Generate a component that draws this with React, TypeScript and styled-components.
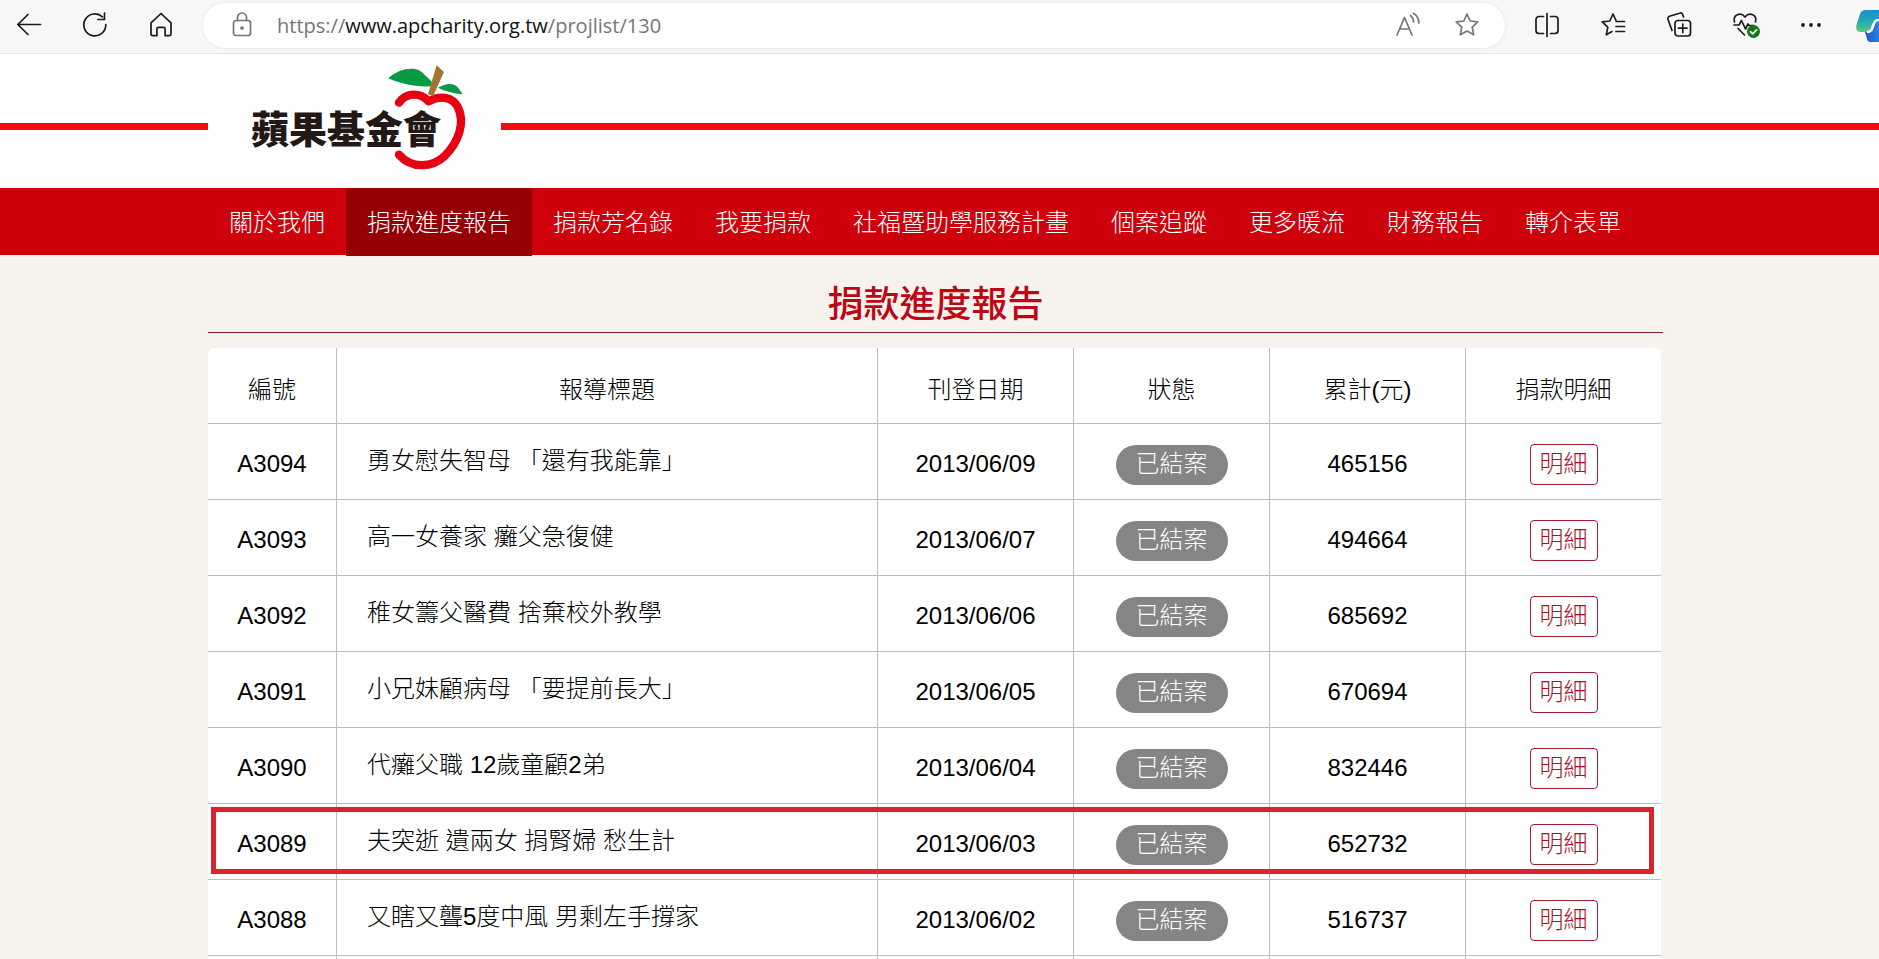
import React from "react";
import styled, { createGlobalStyle } from "styled-components";

const GlobalStyle = createGlobalStyle`
  * { box-sizing: border-box; }
  body {
    margin: 0;
    background: #f7f2ec;
    color: #000;
    font-family: "Liberation Sans", "Noto Sans CJK TC", sans-serif;
    font-size: 24px;
    font-weight: 300;
  }
`;

const Page = styled.div`
  height: 100vh;
  overflow: hidden;
`;

/* Browser bar */

const Toolbar = styled.div`
  display: flex;
  align-items: center;
  height: 54px;
  padding: 0 0 3px 17px;
  background: #f7f7f7;
  border-bottom: 1px solid #e6e6e6;
  overflow: hidden;
`;

const ToolGroup = styled.div`
  display: flex;
  flex: none;
  gap: 42px;
`;

const IconButton = styled.button<{ $muted?: boolean }>`
  display: flex;
  flex: none;
  width: 24px;
  height: 26px;
  padding: 0;
  border: 0;
  background: none;
  color: ${(p) => (p.$muted ? "#767676" : "#1b1b1b")};
  cursor: pointer;

  svg {
    flex: none;
    overflow: visible;
  }
`;

const CopilotButton = styled(IconButton)`
  width: 23px;
  height: 34px;
  margin-left: 33px;
`;

const AddressBar = styled.div`
  display: flex;
  flex: 1;
  align-items: center;
  height: 45px;
  margin: 0 30px;
  padding: 0 26px 0 27px;
  border-radius: 23px;
  background: #fff;
  box-shadow: 0 0 4px rgba(0, 0, 0, 0.08);
`;

const Url = styled.div`
  flex: 1;
  margin-left: 23px;
  padding-top: 1px;
  color: #767676;
  font-family: "Open Sans", sans-serif;
  font-size: 20px;
  font-weight: 400;
  line-height: 28px;
  white-space: nowrap;
  outline: none;

  b {
    color: #111;
    font-weight: 400;
  }
`;

const AddressActions = styled.div`
  display: flex;
  gap: 35px;
`;

/* Site header */

const Header = styled.header`
  display: flex;
  align-items: center;
  padding-top: 11px;
  background: #fff;
`;

const Stripe = styled.span<{ $fill?: boolean }>`
  flex: ${(p) => (p.$fill ? "1" : "0 0 208px")};
  height: 7px;
  background: #f20d0d;
`;

const LogoLink = styled.a`
  display: block;
  flex: none;
  height: 123px;
`;

const LogoText = styled.text`
  font-family: "Noto Sans CJK TC", sans-serif;
  font-size: 38px;
  font-weight: 900;
  fill: #231815;
`;

const Nav = styled.nav`
  display: flex;
  height: 67px;
  padding-left: 208px;
  background: #ce000b;
`;

const NavLink = styled.a<{ $active?: boolean }>`
  height: ${(p) => (p.$active ? "68px" : "67px")};
  padding: 0 21px;
  background: ${(p) => (p.$active ? "#940004" : "transparent")};
  color: #fff;
  line-height: 69px;
  text-decoration: none;
  white-space: nowrap;
`;

/* Report */

const Main = styled.main`
  padding: 0 216px 0 208px;
`;

const Title = styled.h1`
  margin: 0;
  padding: 23px 0 0;
  border-bottom: 1px solid #8f1c2c;
  color: #be0614;
  font-size: 36px;
  font-weight: 500;
  line-height: 54px;
  text-align: center;
`;

const TableWrap = styled.div`
  margin: 15px 2px 0 0;
  border-radius: 6px;
  background: #fff;
`;

const Table = styled.table`
  width: 100%;
  table-layout: fixed;
  border-collapse: separate;
  border-spacing: 0;
`;

const Col = styled.col<{ $width?: number }>`
  width: ${(p) => (p.$width ? `${p.$width}px` : "auto")};
`;

const Row = styled.tr`
  position: relative;
  height: 76px;
`;

const Marker = styled.span`
  position: absolute;
  inset: 3px 7px 6px 3px;
  border: 5px solid #dc232b;
  pointer-events: none;
`;

const HeadCell = styled.th`
  padding: 8px 0 0;
  border-bottom: 1px solid #bdbdbd;
  border-right: 1px solid #bdbdbd;
  font-weight: 300;
  line-height: 36px;

  &:last-child { border-right: 0; }
`;

const Cell = styled.td`
  padding: 5px 0 0;
  border-bottom: 1px solid #bdbdbd;
  border-right: 1px solid #bdbdbd;
  line-height: 36px;
  text-align: center;
  vertical-align: middle;
  white-space: nowrap;

  &:last-child { border-right: 0; }
`;

const TitleCell = styled(Cell)`
  padding: 0 0 2px 30px;
  text-align: left;
`;

const Status = styled.span`
  display: block;
  width: 112px;
  height: 40px;
  margin: 2px auto 0;
  border-radius: 20px;
  background: #858585;
  color: #fff;
  line-height: 38px;
`;

const DetailButton = styled.button`
  display: block;
  width: 68px;
  height: 41px;
  margin: 0 auto;
  padding: 0;
  border: 1px solid #9c1b2f;
  border-radius: 4px;
  background: #fff;
  color: #b00d28;
  font: inherit;
  line-height: 38px;
  cursor: pointer;
`;

const line = {
  fill: "none",
  stroke: "currentColor",
  strokeWidth: 1.7,
  strokeLinecap: "round" as const,
  strokeLinejoin: "round" as const,
};

const Icon = ({ children }: { children: React.ReactNode }) => (
  <svg width="24" height="26" viewBox="0 0 24 26" aria-hidden="true" {...line}>
    {children}
  </svg>
);

const BackIcon = () => (
  <Icon>
    <path d="M23.5 12.5H.8M11 2.5.8 12.5 11 22.500" />
  </Icon>
);

const RefreshIcon = () => (
  <Icon>
    <path d="M22.800 12.500A11 11 0 1 1 19.500 5M21.500 1v6.500H15" />
  </Icon>
);

const HomeIcon = () => (
  <Icon>
    <path d="M2 10.800 12 1.500l10 9.300v11.200a1.600 1.600 0 0 1-1.600 1.600h-4.300V17a1.600 1.600 0 0 0-1.600-1.600h-5A1.600 1.600 0 0 0 7.900 17v6.600H3.600A1.600 1.600 0 0 1 2 22z" />
  </Icon>
);

const LockIcon = () => (
  <Icon>
    <rect x="3.500" y="8.500" width="17" height="15" rx="2.500" />
    <path d="M7.500 8.500V5.500a4.500 4.500 0 0 1 9 0v3" />
    <circle cx="12" cy="16" r="1" fill="currentColor" />
  </Icon>
);

const ReadAloudIcon = () => (
  <Icon>
    <path d="M1 23 8.500 5.500 16 23M3.700 17h9.600M14.500 3.500c2 1.500 3 3.700 3 6.500M17.500 1.500c3.500 2 5.300 5.500 5.300 9.500" />
  </Icon>
);

const StarIcon = () => (
  <Icon>
    <path d="m12 2 3.200 7 7.600.9-5.600 5.300 1.500 7.600L12 19.100l-6.700 3.700 1.500-7.600L1.200 9.900 8.800 9z" />
  </Icon>
);

const SplitIcon = () => (
  <Icon>
    <path d="M12 1.500v23M8.500 4.500H4A3 3 0 0 0 1 7.500v11a3 3 0 0 0 3 3h4.500M15.500 4.500H20a3 3 0 0 1 3 3v11a3 3 0 0 1-3 3h-4.500" />
  </Icon>
);

const FavoritesIcon = () => (
  <Icon>
    <path d="M15.200 9 12 2 8.800 9l-7.600.9 5.600 5.300-1.500 7.600 5.700-3.200M15.200 9.500H23.500M15 14.500h8.500M15 19.500h8.500" />
  </Icon>
);

const CollectionsIcon = () => (
  <Icon>
    <rect x="8" y="8.500" width="15.500" height="15.500" rx="3" />
    <path d="M15.800 12v8.500M11.500 16.200H20M5 18.500 1 7.500A2.500 2.500 0 0 1 2.500 4.200L12.500 1.200A2.500 2.500 0 0 1 15.700 2.700L16.500 5" />
  </Icon>
);

const HealthIcon = () => (
  <Icon>
    <path d="M1.500 10C-.5 3 7.500-.5 12 5c4.500-5.500 12.500-2 10.500 5M1 13h5l2.500-4.500L12.500 17l2.500-5 1 1.500H21M5 16.500l6.500 6.500" />
    <circle cx="20.500" cy="19.500" r="6.500" fill="#137a13" stroke="none" />
    <path d="m17.500 19.700 2.200 2.200 3.900-4" stroke="#fff" />
  </Icon>
);

const MoreIcon = () => (
  <Icon>
    <g fill="currentColor" stroke="none">
      <circle cx="4" cy="13" r="1.900" />
      <circle cx="12" cy="13" r="1.900" />
      <circle cx="20" cy="13" r="1.900" />
    </g>
  </Icon>
);

const CopilotIcon = () => (
  <svg width="36" height="34" viewBox="0 0 36 34" aria-hidden="true">
    <defs>
      <linearGradient id="copilotTeal" x1="0" y1="0" x2="0" y2="1">
        <stop offset="0" stopColor="#1690d0" />
        <stop offset="0.500" stopColor="#22a9b8" />
        <stop offset="1" stopColor="#5ccb74" />
      </linearGradient>
      <linearGradient id="copilotBlue" x1="0" y1="0" x2="1" y2="0">
        <stop offset="0" stopColor="#2054c8" />
        <stop offset="1" stopColor="#31aef0" />
      </linearGradient>
    </defs>
    <path d="M10 2h17l-7 11c-3 1-4 3-5 7-1 3-2 4-4 4H5c-4 0-5.500-3-4.500-7L4 6c1-3 3-4 6-4z" fill="url(#copilotTeal)" />
    <path d="M9 24h3c3 0 5-2 6-6l3-9h15v25H15c-3 0-4-2-4.500-5z" fill="url(#copilotBlue)" />
    <path d="M11 24c4 0 5-2 6.500-7s2.500-5 6.500-5" fill="none" stroke="#fff" strokeWidth="2.500" />
  </svg>
);

const Logo = () => (
  <svg width="293" height="123" viewBox="0 0 293 123" role="img" aria-label="蘋果基金會">
    <g transform="translate(-18 -15) scale(0.3333)">
      <path
        d="M627 158C648 127 690 126 716 154C748 136 786 138 804 172C826 218 806 276 765 317C725 355 664 356 627 314"
        fill="none"
        stroke="#e60012"
        strokeWidth="25"
        strokeLinecap="round"
        strokeLinejoin="round"
      />
      <path d="M595 85C625 56 668 50 690 62C704 72 714 84 726 96L722 109C690 112 636 104 595 85z" fill="#0a9a44" />
      <path d="M744 113C764 100 788 98 799 108C807 115 812 124 818 133C790 130 765 124 744 113z" fill="#0a9a44" />
      <path d="M740 46 762 66 730 137 714 133z" fill="#a57430" />
    </g>
    <LogoText x="43" y="78">蘋果基金會</LogoText>
  </svg>
);

const navItems = [
  "關於我們",
  "捐款進度報告",
  "捐款芳名錄",
  "我要捐款",
  "社福暨助學服務計畫",
  "個案追蹤",
  "更多暖流",
  "財務報告",
  "轉介表單",
];

const columns: { label: string; width?: number }[] = [
  { label: "編號", width: 129 },
  { label: "報導標題" },
  { label: "刊登日期", width: 196 },
  { label: "狀態", width: 196 },
  { label: "累計(元)", width: 196 },
  { label: "捐款明細", width: 195 },
];

const reports = [
  { id: "A3094", title: "勇女慰失智母 「還有我能靠」", date: "2013/06/09", total: "465156" },
  { id: "A3093", title: "高一女養家 癱父急復健", date: "2013/06/07", total: "494664" },
  { id: "A3092", title: "稚女籌父醫費 捨棄校外教學", date: "2013/06/06", total: "685692" },
  { id: "A3091", title: "小兄妹顧病母 「要提前長大」", date: "2013/06/05", total: "670694" },
  { id: "A3090", title: "代癱父職 12歲童顧2弟", date: "2013/06/04", total: "832446" },
  { id: "A3089", title: "夫突逝 遺兩女 捐腎婦 愁生計", date: "2013/06/03", total: "652732", marked: true },
  { id: "A3088", title: "又瞎又聾5度中風 男剩左手撐家", date: "2013/06/02", total: "516737" },
];

export default function App() {
  return (
    <Page>
      <GlobalStyle />
      <Toolbar>
        <ToolGroup>
          <IconButton aria-label="Back"><BackIcon /></IconButton>
          <IconButton aria-label="Refresh"><RefreshIcon /></IconButton>
          <IconButton aria-label="Home"><HomeIcon /></IconButton>
        </ToolGroup>
        <AddressBar>
          <IconButton $muted aria-label="Site information"><LockIcon /></IconButton>
          <Url role="textbox" aria-label="Address" contentEditable suppressContentEditableWarning spellCheck={false}>
            https://<b>www.apcharity.org.tw</b>/projlist/130
          </Url>
          <AddressActions>
            <IconButton $muted aria-label="Read aloud"><ReadAloudIcon /></IconButton>
            <IconButton $muted aria-label="Add to favorites"><StarIcon /></IconButton>
          </AddressActions>
        </AddressBar>
        <ToolGroup>
          <IconButton aria-label="Split screen"><SplitIcon /></IconButton>
          <IconButton aria-label="Favorites"><FavoritesIcon /></IconButton>
          <IconButton aria-label="Collections"><CollectionsIcon /></IconButton>
          <IconButton aria-label="Browser essentials"><HealthIcon /></IconButton>
          <IconButton aria-label="More"><MoreIcon /></IconButton>
        </ToolGroup>
        <CopilotButton aria-label="Copilot"><CopilotIcon /></CopilotButton>
      </Toolbar>

      <Header>
        <Stripe />
        <LogoLink href="#home"><Logo /></LogoLink>
        <Stripe $fill />
      </Header>
      <Nav>
        {navItems.map((item, i) => (
          <NavLink key={item} href={`#nav-${i}`} $active={i === 1}>{item}</NavLink>
        ))}
      </Nav>

      <Main>
        <Title>捐款進度報告</Title>
        <TableWrap>
          <Table>
            <colgroup>
              {columns.map((c) => <Col key={c.label} $width={c.width} />)}
            </colgroup>
            <thead>
              <Row>
                {columns.map((c) => <HeadCell key={c.label} scope="col">{c.label}</HeadCell>)}
              </Row>
            </thead>
            <tbody>
              {reports.map((r) => (
                <Row key={r.id}>
                  <Cell>
                    {r.id}
                    {r.marked && <Marker />}
                  </Cell>
                  <TitleCell>{r.title}</TitleCell>
                  <Cell>{r.date}</Cell>
                  <Cell><Status>已結案</Status></Cell>
                  <Cell>{r.total}</Cell>
                  <Cell><DetailButton>明細</DetailButton></Cell>
                </Row>
              ))}
              <Row>
                {columns.map((c) => <Cell key={c.label} />)}
              </Row>
            </tbody>
          </Table>
        </TableWrap>
      </Main>
    </Page>
  );
}
